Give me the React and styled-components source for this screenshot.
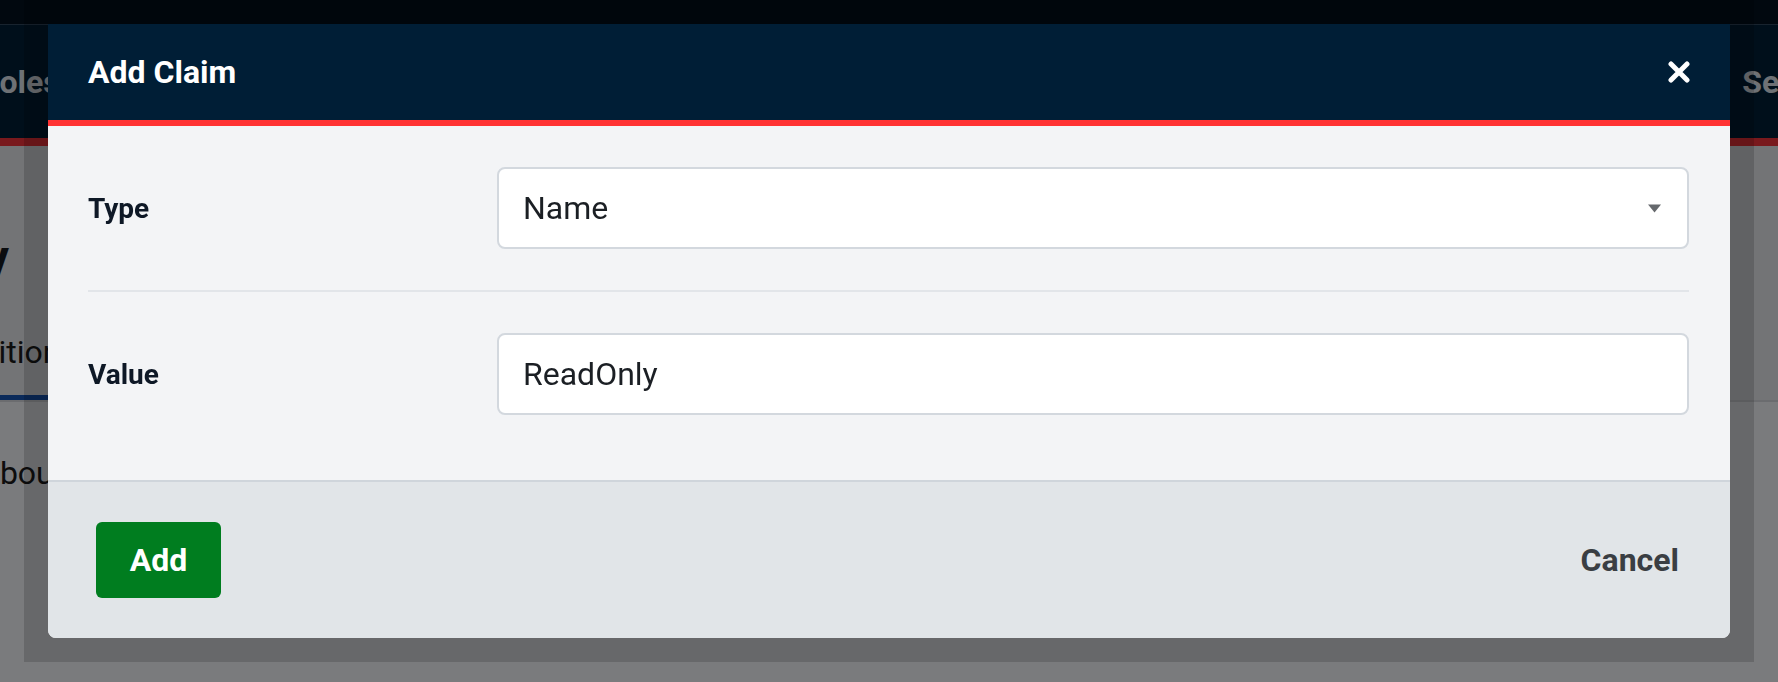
import React from "react";
import styled, {createGlobalStyle} from "styled-components";

const GlobalStyle = createGlobalStyle`
  html, body {
    margin: 0;
    padding: 0;
    height: 100%;
    overflow: hidden;
    background: #f4f6fa;
    font-family: Roboto, "Liberation Sans", Arial, sans-serif;
  }
  * {
    box-sizing: border-box;
  }
`;

// page underneath the dialog (dimmed by the overlay)
const Page = styled.div`
  width: 100%;
  height: 100vh;
  overflow: hidden;
`;

const TopBar = styled.div`
  height: 24px;
  background: #02101e;
`;

const NavBar = styled.div`
  height: 122px;
  display: flex;
  align-items: center;
  background: #001e36;
  border-top: 1px solid #30465c;
  border-bottom: 8px solid #f2333a;
  overflow: hidden;
`;

const NavTab = styled.div`
  font-size: 32px;
  font-weight: 700;
  color: #dde3ea;
  white-space: nowrap;
  margin-left: ${(p) => p.$offset || 0}px;
  margin-right: ${(p) => p.$trail || 0}px;
`;

const NavSpacer = styled.div`
  flex: 1;
`;

const PageHeader = styled.div`
  height: 256px;
  background: #e6e8ec;
  display: flex;
  flex-direction: column;
`;

const ClipRight = styled.div`
  width: ${(p) => p.$width}px;
  display: flex;
  justify-content: flex-end;
  white-space: nowrap;
`;

const PageTitle = styled.div`
  margin-top: 84px;
  font-size: 48px;
  font-weight: 700;
  color: #15191e;
  line-height: 56px;
`;

const PageTabs = styled.div`
  margin-top: auto;
  display: flex;
  border-bottom: 2px solid #d6d9de;
`;

const PageTab = styled.div`
  margin-left: ${(p) => p.$offset}px;
  padding: 0 24px 24px 0;
  font-size: 32px;
  color: #1a1a1a;
  white-space: nowrap;
  border-bottom: 5px solid #1554b4;
`;

const PageBody = styled.div`
  padding-top: 52px;
  font-size: 32px;
  color: #1a1a1a;
  white-space: nowrap;
  margin-left: ${(p) => p.$offset}px;
`;

// dialog
const Overlay = styled.div`
  position: fixed;
  inset: 0;
  background: rgba(0, 0, 0, 0.5);
  display: flex;
  align-items: flex-start;
  justify-content: center;
`;

const Frame = styled.div`
  width: calc(100% - 48px);
  padding: 24px;
  background: rgba(0, 0, 0, 0.15);
`;

const Dialog = styled.div`
  background: #f3f4f6;
  border-radius: 0 0 8px 8px;
  overflow: hidden;
  display: flex;
  flex-direction: column;
`;

const DialogHeader = styled.div`
  height: 102px;
  padding: 0 40px;
  display: flex;
  align-items: center;
  justify-content: space-between;
  background: #001e36;
  border-bottom: 6px solid #ff3333;
`;

const DialogTitle = styled.div`
  color: #ffffff;
  font-size: 32px;
  font-weight: 700;
`;

const CloseButton = styled.button`
  width: 22px;
  height: 22px;
  padding: 0;
  border: 0;
  background: none;
  display: flex;
  cursor: pointer;
`;

const DialogBody = styled.div`
  padding: 41px 41px 65px 40px;
`;

const FieldRow = styled.div`
  display: flex;
  align-items: center;
`;

const FieldLabel = styled.div`
  width: 409px;
  flex-shrink: 0;
  font-size: 28px;
  font-weight: 700;
  color: #0e1826;
`;

const SelectBox = styled.div`
  flex: 1;
  height: 82px;
  padding: 0 26px 0 24px;
  display: flex;
  align-items: center;
  justify-content: space-between;
  background: #ffffff;
  border: 2px solid #d3d8de;
  border-radius: 8px;
  font-size: 32px;
  color: #1b1f24;
`;

const TextInput = styled.input`
  flex: 1;
  height: 82px;
  padding: 0 24px;
  background: #ffffff;
  border: 2px solid #d3d8de;
  border-radius: 8px;
  font-family: inherit;
  font-size: 32px;
  color: #1b1f24;
  outline: none;
`;

const Divider = styled.div`
  height: 2px;
  margin: 41px 0 41px;
  background: #e2e5e9;
`;

const DialogFooter = styled.div`
  height: 158px;
  padding: 0 51px 0 48px;
  display: flex;
  align-items: center;
  justify-content: space-between;
  background: #e1e5e8;
  border-top: 2px solid #cfd5db;
`;

const AddButton = styled.button`
  width: 125px;
  height: 76px;
  border: 0;
  border-radius: 6px;
  background: #007d1f;
  color: #ffffff;
  font-family: inherit;
  font-size: 32px;
  font-weight: 700;
  cursor: pointer;
`;

const CancelButton = styled.button`
  padding: 0;
  border: 0;
  background: none;
  color: #3a3e43;
  font-family: inherit;
  font-size: 32px;
  font-weight: 700;
  cursor: pointer;
`;

function CaretDown() {
  return (
    <svg width="13" height="9" viewBox="0 0 13 9">
      <path d="M0 0.5 H13 L6.5 8.5 Z" fill="#66696d"/>
    </svg>
  );
}

function CloseIcon() {
  return (
    <svg width="22" height="22" viewBox="0 0 22 22">
      <path d="M3 3 L19 19 M19 3 L3 19" stroke="#ffffff" strokeWidth="5" strokeLinecap="round"/>
    </svg>
  );
}

export default function App() {
  return (
    <>
      <GlobalStyle/>
      <Page>
        <TopBar/>
        <NavBar>
          <NavTab $offset={-21}>Roles</NavTab>
          <NavSpacer/>
          <NavTab $trail={-84}>Settings</NavTab>
        </NavBar>
        <PageHeader>
          <ClipRight $width={9}>
            <PageTitle>Directory</PageTitle>
          </ClipRight>
          <PageTabs>
            <PageTab $offset={-75}>Definition</PageTab>
          </PageTabs>
        </PageHeader>
        <PageBody $offset={-21}>About this role</PageBody>
      </Page>

      <Overlay>
        <Frame>
          <Dialog>
            <DialogHeader>
              <DialogTitle>Add Claim</DialogTitle>
              <CloseButton aria-label="Close">
                <CloseIcon/>
              </CloseButton>
            </DialogHeader>

            <DialogBody>
              <FieldRow>
                <FieldLabel>Type</FieldLabel>
                <SelectBox>
                  <span>Name</span>
                  <CaretDown/>
                </SelectBox>
              </FieldRow>

              <Divider/>

              <FieldRow>
                <FieldLabel>Value</FieldLabel>
                <TextInput defaultValue="ReadOnly"/>
              </FieldRow>
            </DialogBody>

            <DialogFooter>
              <AddButton>Add</AddButton>
              <CancelButton>Cancel</CancelButton>
            </DialogFooter>
          </Dialog>
        </Frame>
      </Overlay>
    </>
  );
}
